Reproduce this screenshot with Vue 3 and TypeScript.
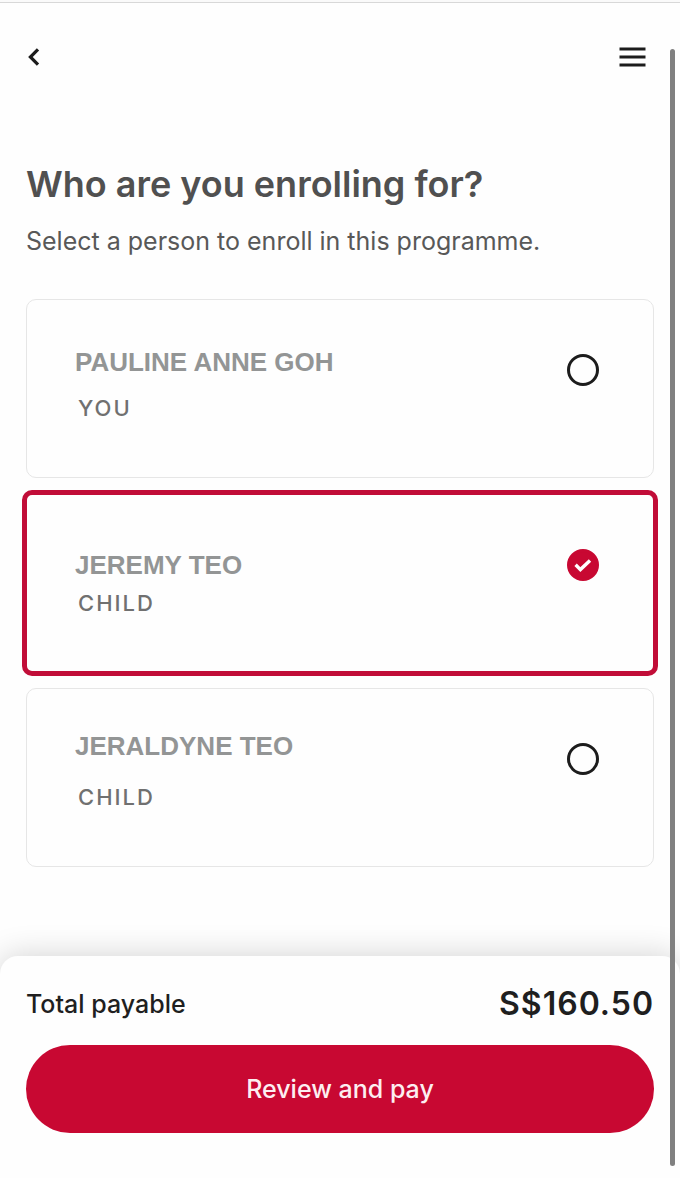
<script setup lang="ts">
import { ref } from 'vue'

interface Person {
  id: string
  name: string
  relation: string
  spacing: 'tight' | 'medium' | 'loose'
}

const people: Person[] = [
  { id: 'pauline', name: 'PAULINE ANNE GOH', relation: 'YOU', spacing: 'medium' },
  { id: 'jeremy', name: 'JEREMY TEO', relation: 'CHILD', spacing: 'tight' },
  { id: 'jeraldyne', name: 'JERALDYNE TEO', relation: 'CHILD', spacing: 'loose' },
]

const selected = ref<string>('jeremy')
</script>

<template>
  <div class="page">
    <header class="topbar">
      <button class="icon-button" type="button" aria-label="Back">
        <svg width="16" height="20" viewBox="0 0 16 20" fill="none">
          <path d="M12 2.4 4.4 10l7.6 7.6" stroke="#1c1c1c" stroke-width="3.2" />
        </svg>
      </button>
      <button class="icon-button" type="button" aria-label="Menu">
        <svg width="28" height="20" viewBox="0 0 28 20" fill="none">
          <path d="M1.5 2h26M1.5 10h26M1.5 18h26" stroke="#1c1c1c" stroke-width="3" />
        </svg>
      </button>
    </header>

    <main class="content">
      <h1 class="title">Who are you enrolling for?</h1>
      <p class="subtitle">Select a person to enroll in this programme.</p>

      <div class="people" role="radiogroup" aria-label="Person to enroll">
        <label
          v-for="person in people"
          :key="person.id"
          class="card"
          :class="{ selected: selected === person.id }"
          :for="person.id"
        >
          <span class="info" :class="person.spacing">
            <span class="name">{{ person.name }}</span>
            <span class="relation">{{ person.relation }}</span>
          </span>
          <span class="choice">
            <input :id="person.id" v-model="selected" class="radio" type="radio" name="person" :value="person.id" />
            <svg v-if="selected === person.id" class="tick" viewBox="0 0 32 32" fill="none">
              <path d="M8.6 15.8 13.4 20.6 23 11.4" stroke="#fff" stroke-width="3.4" />
            </svg>
          </span>
        </label>
      </div>
    </main>

    <footer class="checkout">
      <div class="total">
        <span class="total-label">Total payable</span>
        <span class="amount">S$160.50</span>
      </div>
      <button class="pay" type="button">Review and pay</button>
    </footer>

    <div class="scroll-thumb" aria-hidden="true"></div>
  </div>
</template>

<style>
body {
  margin: 0;
  background: #fefefe;
}
</style>

<style scoped>
.page {
  box-sizing: border-box;
  display: flex;
  flex-direction: column;
  min-height: 100vh;
  overflow: hidden;
  border-top: 2px solid #fafafa;
  background: #fefefe;
  font-family: Inter, "Liberation Sans", sans-serif;
  color: #505050;
}

.topbar {
  display: flex;
  align-items: center;
  justify-content: space-between;
  height: 108px;
  padding: 0 34px 0 26px;
  box-sizing: border-box;
  border-top: 1px solid #d8d8d8;
}

.icon-button {
  display: flex;
  padding: 0;
  border: 0;
  background: none;
}

.content {
  padding: 50px 26px 0;
}

.title {
  margin: 0;
  font-size: 36px;
  line-height: 48px;
  font-weight: 600;
}

.subtitle {
  margin: 16px 0 0;
  font-size: 25px;
  line-height: 34px;
  color: #585858;
}

.people {
  display: flex;
  flex-direction: column;
  gap: 12px;
  margin-top: 41px;
}

.card {
  display: flex;
  justify-content: space-between;
  box-sizing: border-box;
  padding: 0 54px 55px 48px;
  border: 1px solid #e6e6e6;
  border-radius: 10px;
}

.card.selected {
  margin: 0 -4px;
  border: 5px solid #c10d38;
  padding-bottom: 54px;
}

.info {
  display: flex;
  flex-direction: column;
  justify-content: flex-end;
  height: 122px;
}

.name {
  font-family: "Liberation Sans", Arial, sans-serif;
  font-size: 26px;
  line-height: 30px;
  font-weight: 700;
  color: #939595;
}

.relation {
  padding-left: 3px;
  font-size: 22px;
  line-height: 28px;
  font-weight: 500;
  letter-spacing: 2px;
  color: #707070;
}

.tight {
  gap: 9px;
}

.medium {
  gap: 17px;
}

.loose {
  gap: 22px;
}

.choice {
  position: relative;
  width: 32px;
  height: 32px;
  margin-top: 54px;
}

.radio {
  appearance: none;
  display: block;
  box-sizing: border-box;
  width: 32px;
  height: 32px;
  margin: 0;
  border: 3px solid #1c1c1c;
  border-radius: 50%;
}

.radio:checked {
  border-color: #c80832;
  background: #c80832;
}

.tick {
  position: absolute;
  inset: 0;
  pointer-events: none;
}

.checkout {
  box-sizing: border-box;
  margin-top: auto;
  padding: 24px 26px 45px;
  border-radius: 18px 18px 0 0;
  background: #fefefe;
  box-shadow: 0 0 32px rgba(0, 0, 0, 0.18);
}

.total {
  display: flex;
  align-items: center;
  justify-content: space-between;
  height: 48px;
  margin-bottom: 17px;
  color: #1f1f1f;
}

.total-label {
  font-size: 25px;
  font-weight: 500;
}

.amount {
  font-size: 32px;
  line-height: 44px;
  font-weight: 600;
  letter-spacing: 1px;
}

.pay {
  display: block;
  width: 100%;
  height: 88px;
  border: 0;
  border-radius: 44px;
  background: #c80832;
  color: #fdeef1;
  font-family: inherit;
  font-size: 25px;
  font-weight: 500;
}

.scroll-thumb {
  position: fixed;
  top: 49px;
  right: 5px;
  bottom: 12px;
  width: 5px;
  border-radius: 3px;
  background: #808080;
}
</style>
